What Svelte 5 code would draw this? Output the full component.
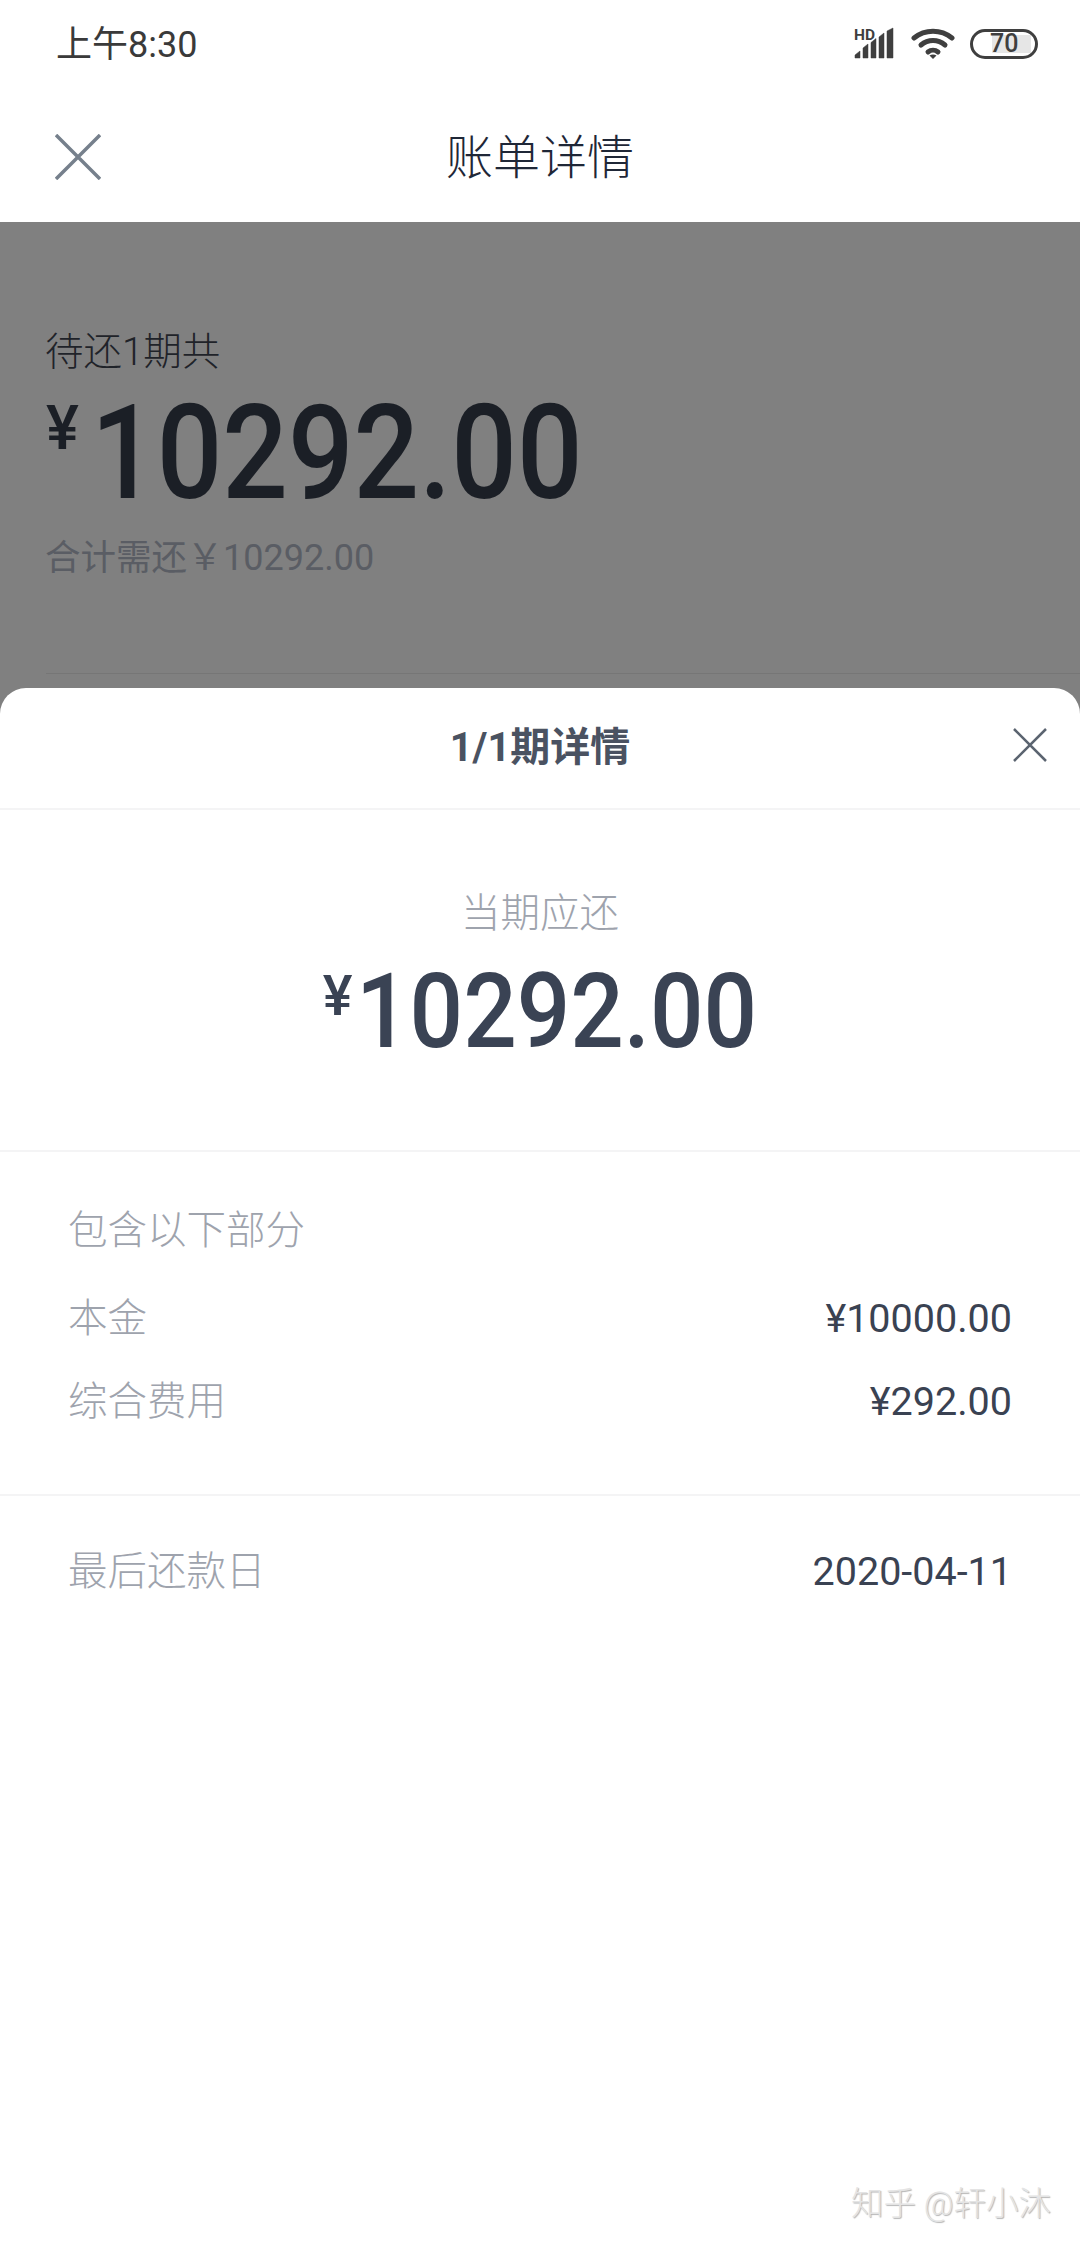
<script>
  const parts = [
    { label: '本金', value: '¥10000.00' },
    { label: '综合费用', value: '¥292.00' }
  ];
</script>

<div class="page">
  <div class="status">
    <span class="time">上午8:30</span>
    <div class="status-icons">
      <svg class="signal" width="42" height="44" viewBox="0 -6 42 44">
        <text x="0" y="11.5" class="hd">HD</text>
        <path d="M1 30v-3l5-4v7zM9 30V20l5-4v14zM17 30V14.5l5-4V30zM25 30V9l5-4v25zM33 30V3l6-3v30z" fill="#3f3f3f" stroke="#3f3f3f" stroke-width=".5" stroke-linejoin="round" />
      </svg>
      <svg class="wifi" width="44" height="32" viewBox="0 0 44 32">
        <path d="M3 10C14 1 30 1 41 10" />
        <path d="M10 17C17 11 27 11 34 17" />
        <path d="M17 24c3-2.500 7-2.500 10 0" />
        <path class="dot" d="M22 31l-3.500-3.500c2-1.500 5-1.500 7 0z" />
      </svg>
      <div class="battery"><span class="level"></span><span class="pct">70</span></div>
    </div>
  </div>

  <header class="nav">
    <svg class="nav-close" width="46" height="46" viewBox="0 0 46 46">
      <path d="M1 1L45 45M45 1L1 45" />
    </svg>
    <h1>账单详情</h1>
  </header>

  <main class="dim">
    <section class="summary">
      <div class="due">待还1期共</div>
      <div class="total">
        <span class="yen">¥</span>
        <span class="digits">10292.00</span>
      </div>
      <div class="sum">合计需还<span class="sum-num">￥10292.00</span></div>
      <div class="rule"></div>
    </section>

    <section class="sheet">
      <div class="sheet-head">
        <h2>1/1期详情</h2>
        <svg class="sheet-close" width="34" height="34" viewBox="0 0 34 34">
          <path d="M1 1L33 33M33 1L1 33" />
        </svg>
      </div>

      <div class="current">
        <div class="current-label">当期应还</div>
        <div class="current-amount">
          <span class="yen2">¥</span>
          <span class="digits2">10292.00</span>
        </div>
      </div>

      <div class="parts">
        <div class="parts-title">包含以下部分</div>
        {#each parts as part}
          <div class="row">
            <span class="label">{part.label}</span>
            <span class="value">{part.value}</span>
          </div>
        {/each}
      </div>

      <div class="row last">
        <span class="label">最后还款日</span>
        <span class="value">2020-04-11</span>
      </div>

      <div class="watermark">知乎 @轩小沐</div>
    </section>
  </main>
</div>

<style>
  :global(body) {
    margin: 0;
    background: #fff;
  }

  .page {
    display: flex;
    flex-direction: column;
    height: 2248px;
    overflow: hidden;
    font-family: Roboto, "Noto Sans CJK SC", sans-serif;
  }

  .status {
    display: flex;
    justify-content: space-between;
    align-items: center;
    box-sizing: border-box;
    height: 88px;
    padding: 0 42px 0 56px;
  }

  .time {
    font-size: 36px;
    line-height: 40px;
    margin-top: 2px;
    color: #3a3a3a;
  }

  .status-icons {
    display: flex;
    align-items: center;
    gap: 15px;
  }

  .hd {
    font-size: 15.5px;
    font-weight: 700;
    fill: #3f3f3f;
    font-family: Roboto, sans-serif;
  }

  .wifi path {
    fill: none;
    stroke: #3f3f3f;
    stroke-width: 5;
    stroke-linecap: round;
  }

  .wifi .dot {
    fill: #3f3f3f;
    stroke: none;
  }

  .battery {
    position: relative;
    box-sizing: border-box;
    width: 68px;
    height: 30px;
    border: 3.5px solid #3f3f3f;
    border-radius: 15px;
  }

  .level {
    position: absolute;
    top: 3px;
    bottom: 3px;
    left: 19px;
    right: 4px;
    background: #e6e6e6;
  }

  .pct {
    position: absolute;
    left: 17px;
    top: 0;
    line-height: 23px;
    font-size: 25px;
    font-weight: 500;
    color: #3f3f3f;
  }

  .nav {
    position: relative;
    display: flex;
    justify-content: center;
    align-items: center;
    height: 134px;
  }

  .nav h1 {
    margin: 0 0 3px;
    font-size: 47px;
    font-weight: 300;
    color: #1f2737;
  }

  .nav-close {
    position: absolute;
    left: 55px;
    top: 46px;
  }

  .nav-close path {
    fill: none;
    stroke: #76808c;
    stroke-width: 3.500;
  }

  .dim {
    flex: 1;
    display: flex;
    flex-direction: column;
    background: #808080;
  }

  .summary {
    height: 466px;
    box-sizing: border-box;
    padding: 105px 0 0 46px;
    display: flex;
    flex-direction: column;
  }

  .due {
    font-size: 38.500px;
    line-height: 50px;
    font-weight: 300;
    color: #1f2329;
    margin-left: -1px;
  }

  .total {
    display: flex;
    align-items: flex-start;
    height: 124px;
    margin-top: 14px;
    color: #1b1f26;
  }

  .yen {
    font-size: 62px;
    line-height: 74px;
    font-weight: 500;
    width: 45px;
  }

  .digits {
    font-size: 132px;
    line-height: 124px;
    font-weight: 500;
    transform: scaleX(0.875);
    transform-origin: left;
    white-space: nowrap;
  }

  .sum {
    margin-top: 19px;
    font-size: 35.500px;
    line-height: 48px;
    color: #5a5d64;
    margin-left: -1px;
  }

  .sum-num {
    font-size: 36px;
  }

  .rule {
    margin-top: 91px;
    height: 1px;
    background: #767676;
  }

  .sheet {
    flex: 1;
    display: flex;
    flex-direction: column;
    background: #fff;
    border-radius: 26px 26px 0 0;
  }

  .sheet-head {
    position: relative;
    display: flex;
    justify-content: center;
    align-items: center;
    box-sizing: border-box;
    height: 122px;
    padding-bottom: 8px;
    border-bottom: 2px solid #f4f4f5;
  }

  .sheet-head h2 {
    margin: 0;
    font-size: 40px;
    font-weight: 700;
    color: #4a5261;
  }

  .sheet-close {
    position: absolute;
    right: 33px;
    top: 40px;
  }

  .sheet-close path {
    fill: none;
    stroke: #5b6470;
    stroke-width: 2.500;
  }

  .current {
    height: 342px;
    box-sizing: border-box;
    padding-top: 77px;
    display: flex;
    flex-direction: column;
    align-items: center;
    border-bottom: 2px solid #f4f4f5;
  }

  .current-label {
    font-size: 39.500px;
    line-height: 54px;
    font-weight: 300;
    color: #9ea3ad;
  }

  .current-amount {
    display: flex;
    align-items: flex-start;
    margin-top: 19px;
    margin-left: 1px;
    color: #3a4354;
  }

  .yen2 {
    font-size: 56px;
    line-height: 72px;
    font-weight: 500;
    margin-right: 4px;
  }

  .digits2 {
    font-size: 103px;
    line-height: 104px;
    font-weight: 500;
    width: 402px;
    transform: scaleX(0.915);
    transform-origin: left;
    white-space: nowrap;
  }

  .parts {
    padding: 52px 68px 0;
    height: 344px;
    box-sizing: border-box;
    border-bottom: 2px solid #f4f4f5;
  }

  .parts-title {
    font-size: 39.500px;
    line-height: 54px;
    font-weight: 300;
    color: #9ea3ad;
    margin-bottom: 31px;
  }

  .row {
    display: flex;
    justify-content: space-between;
    align-items: baseline;
    height: 83px;
    line-height: 60px;
  }

  .row.last {
    padding: 46px 68px 0;
  }

  .label {
    font-size: 39.500px;
    font-weight: 300;
    color: #9ea3ad;
  }

  .value {
    font-size: 39.500px;
    color: #3a4252;
  }

  .watermark {
    margin-top: auto;
    margin-bottom: 24px;
    padding-right: 29px;
    text-align: right;
    font-size: 32.500px;
    line-height: 40px;
    font-weight: 300;
    color: #e4e4e4;
    text-shadow: 1px 1px 1px #b5b5b5;
  }
</style>
